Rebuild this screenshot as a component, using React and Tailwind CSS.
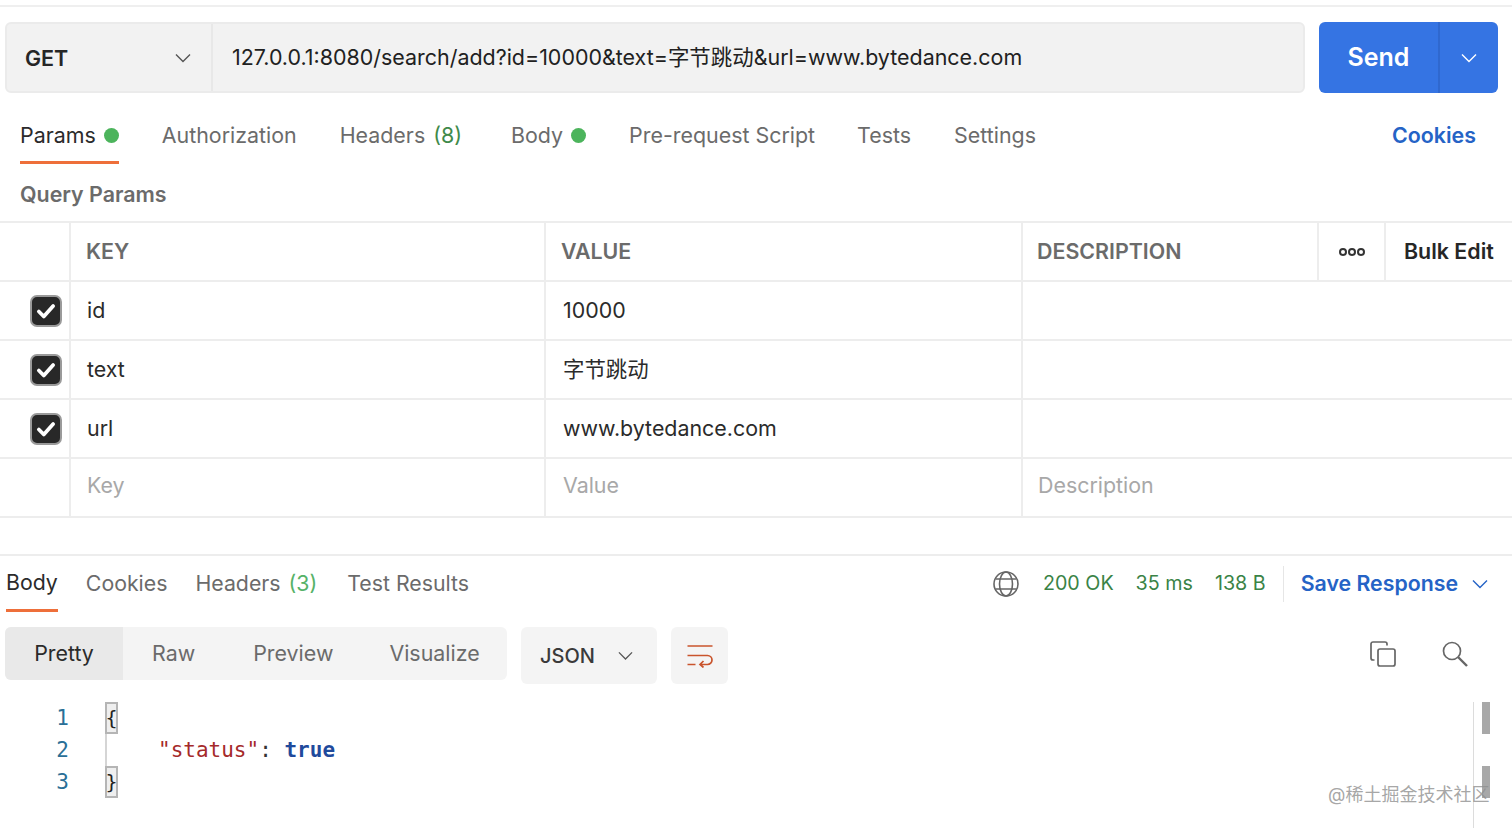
import React from "react";

const sans = 'font-["Inter","Noto_Sans_CJK_SC",sans-serif]';

const Chevron = ({ className = "" }) => (
  <svg viewBox="0 0 16 10" fill="none" stroke="currentColor" strokeWidth="1.4" className={className}>
    <path d="M1 1.5 8 8.5 15 1.5" />
  </svg>
);

const Tick = () => (
  <svg viewBox="0 0 20 20" fill="none" stroke="white" strokeWidth="3.4" className="h-[22px] w-[22px]">
    <path d="M3.5 10.5 8 15 16.5 5.5" strokeLinecap="round" strokeLinejoin="round" />
  </svg>
);

const Dot = () => <span className="h-[15px] w-[15px] rounded-full bg-[#4cb45c]" />;

const RequestTab = ({ label, count, dot, active, className = "" }) => (
  <div className={`flex h-full items-center gap-[8px] border-b-[3px] pb-[5px] ${active ? "border-[#ee6f3a] text-[#2b2b2b]" : "border-transparent text-[#6b6b6b]"} ${className}`}>
    <span>{label}</span>
    {count && <span className="text-[#3f8a4a]">{count}</span>}
    {dot && <Dot />}
  </div>
);

const ParamRow = ({ name, value }) => (
  <div className="grid h-[59px] grid-cols-[71px_475px_477px_1fr] border-b-2 border-[#ededed] text-[21.4px] text-[#2b2b2b]">
    <div className="flex items-center justify-end border-r-2 border-[#ededed] pr-[7px]">
      <div className="flex h-[32px] w-[32px] items-center justify-center rounded-[7px] border-2 border-[#9a9a9a] bg-[#282828]">
        <Tick />
      </div>
    </div>
    <div className="flex items-center border-r-2 border-[#ededed] pb-[1px] pl-[16px]">{name}</div>
    <div className="flex items-center border-r-2 border-[#ededed] pb-[1px] pl-[17px]">{value}</div>
    <div />
  </div>
);

const App = () => (
  <div className={`relative h-[828px] w-[1512px] overflow-hidden bg-white ${sans}`}>
    <div className="mt-[5px] h-[2px] bg-[#efefef]" />

    {/* url bar */}
    <div className="mt-[15px] flex h-[71px] pl-[5px] pr-[14px]">
      <div className="flex w-[1300px] rounded-[6px] border-2 border-[#ebebeb] bg-[#f2f2f2]">
        <div className="flex w-[206px] items-center justify-between border-r-2 border-[#e8e8e8] pl-[18px] pr-[20px]">
          <span className="pt-[1px] text-[21.5px] font-semibold text-[#262626]">GET</span>
          <Chevron className="w-[16px] text-[#555]" />
        </div>
        <div className="flex items-center pb-[1px] pl-[19px] text-[21.45px] text-[#212121]">
          127.0.0.1:8080/search/add?id=10000&text=字节跳动&url=www.bytedance.com
        </div>
      </div>
      <div className="ml-[14px] flex w-[179px] rounded-[6px] bg-[#3574e3] text-white">
        <div className="flex w-[121px] items-center justify-center border-r-2 border-[#2f68cf] text-[25px] font-semibold">Send</div>
        <div className="flex flex-1 items-center justify-center">
          <Chevron className="w-[16px]" />
        </div>
      </div>
    </div>

    {/* request tabs */}
    <div className="mt-[21px] flex h-[50px] items-center pl-[20px] pr-[36px] text-[21.4px]">
      <RequestTab label="Params" dot active />
      <RequestTab label="Authorization" className="ml-[43px]" />
      <RequestTab label="Headers" count="(8)" className="ml-[43px]" />
      <RequestTab label="Body" dot className="ml-[49px]" />
      <RequestTab label="Pre-request Script" className="ml-[43px]" />
      <RequestTab label="Tests" className="ml-[42px]" />
      <RequestTab label="Settings" className="ml-[43px]" />
      <span className="ml-auto pb-[8px] font-semibold text-[#2563c6]">Cookies</span>
    </div>

    <div className="mt-[16px] h-[41px] pl-[20px] text-[21.4px] font-semibold leading-[28px] text-[#6b6b6b]">Query Params</div>

    {/* params table */}
    <div className="border-t-2 border-[#ededed]">
      <div className="grid h-[59px] grid-cols-[71px_475px_477px_296px_67px_1fr] border-b-2 border-[#ededed] text-[21.4px] font-semibold text-[#6b6b6b]">
        <div className="border-r-2 border-[#ededed]" />
        <div className="flex items-center border-r-2 border-[#ededed] pb-[1px] pl-[15px]">KEY</div>
        <div className="flex items-center border-r-2 border-[#ededed] pb-[1px] pl-[15px]">VALUE</div>
        <div className="flex items-center border-r-2 border-[#ededed] pb-[1px] pl-[14px]">DESCRIPTION</div>
        <div className="flex items-center justify-center gap-[1px] border-r-2 border-[#ededed]">
          <span className="h-[8px] w-[8px] rounded-full border-2 border-[#333]" />
          <span className="h-[8px] w-[8px] rounded-full border-2 border-[#333]" />
          <span className="h-[8px] w-[8px] rounded-full border-2 border-[#333]" />
        </div>
        <div className="flex items-center pb-[1px] pl-[18px] text-[#262626]">Bulk Edit</div>
      </div>
      <ParamRow name="id" value="10000" />
      <ParamRow name="text" value="字节跳动" />
      <ParamRow name="url" value="www.bytedance.com" />
      <div className="grid h-[59px] grid-cols-[71px_475px_477px_1fr] border-b-2 border-[#ededed] text-[21.4px] text-[#a8a8a8]">
        <div className="border-r-2 border-[#ededed]" />
        <div className="flex items-center border-r-2 border-[#ededed] pb-[4px] pl-[16px]">Key</div>
        <div className="flex items-center border-r-2 border-[#ededed] pb-[4px] pl-[17px]">Value</div>
        <div className="flex items-center pb-[4px] pl-[15px]">Description</div>
      </div>
    </div>

    {/* response */}
    <div className="mt-[36px] border-t-2 border-[#ededed]">
      <div className="flex h-[56px] items-center pl-[6px] pr-[24px] text-[21.3px]">
        <div className="flex h-full items-center border-b-[3px] border-[#ee6f3a] pt-[1px] text-[#2b2b2b]">Body</div>
        <span className="mb-[1px] ml-[28px] text-[#6b6b6b]">Cookies</span>
        <span className="mb-[1px] ml-[28px] text-[#6b6b6b]">Headers</span>
        <span className="mb-[1px] ml-[8px] text-[#56b268]">(3)</span>
        <span className="mb-[1px] ml-[30px] text-[#6b6b6b]">Test Results</span>
        <div className="mb-[1px] ml-auto flex items-center text-[19.7px] text-[#3a8346]">
          <svg viewBox="0 0 26 26" fill="none" stroke="#666" strokeWidth="1.6" className="mr-[24px] h-[26px] w-[26px]">
            <circle cx="13" cy="13" r="12" />
            <ellipse cx="13" cy="13" rx="6.5" ry="12" />
            <path d="M2.5 8h21M2.5 18h21" />
          </svg>
          <span>200 OK</span>
          <span className="ml-[22px]">35 ms</span>
          <span className="ml-[22px]">138 B</span>
          <span className="ml-[17px] h-[36px] w-[1px] bg-[#e6e6e6]" />
          <span className="ml-[17px] text-[21.3px] font-semibold text-[#2563c6]">Save Response</span>
          <Chevron className="ml-[14px] w-[16px] text-[#2563c6]" />
        </div>
      </div>

      {/* view toolbar */}
      <div className="mt-[15px] flex h-[57px] items-start pl-[5px] pr-[44px]">
        <div className="flex h-[53px] w-[502px] items-center rounded-[6px] bg-[#f4f4f4] text-[21.4px] text-[#6b6b6b]">
          <div className="flex h-full w-[118px] items-center justify-center rounded-l-[6px] bg-[#e9e9e9] text-[#2b2b2b]">Pretty</div>
          <span className="ml-[29px]">Raw</span>
          <span className="ml-[58px]">Preview</span>
          <span className="ml-[56px]">Visualize</span>
        </div>
        <div className="ml-[14px] flex h-[57px] w-[136px] items-center justify-between rounded-[6px] bg-[#f4f4f4] pl-[19px] pr-[24px]">
          <span className="text-[20px] font-medium text-[#3a3a3a]">JSON</span>
          <Chevron className="w-[15px] text-[#555]" />
        </div>
        <div className="ml-[14px] flex h-[57px] w-[57px] items-center justify-center rounded-[6px] bg-[#f4f4f4]">
          <svg viewBox="0 0 26 24" fill="none" stroke="#c9542c" strokeWidth="1.7" className="h-[24px] w-[26px]">
            <path d="M0.5 2h25M0.5 11.5h20a4.5 4.5 0 0 1 0 9h-7M16.5 17l-3.5 3.5 3.5 3M0.5 20.5h8" />
          </svg>
        </div>
        <svg viewBox="0 0 26 26" fill="none" stroke="#666" strokeWidth="1.7" className="ml-auto mr-[46px] mt-[14px] h-[26px] w-[26px]">
          <rect x="8" y="8" width="17" height="17" rx="2" />
          <path d="M4.5 19H3a2 2 0 0 1-2-2V3a2 2 0 0 1 2-2h12a2 2 0 0 1 2 2v1.5" />
        </svg>
        <svg viewBox="0 0 26 26" fill="none" stroke="#666" strokeWidth="1.7" className="mt-[14px] h-[26px] w-[26px]">
          <circle cx="10" cy="10" r="8.5" />
          <path d="M16 16l9 9" strokeWidth="2.4" />
        </svg>
      </div>

      {/* code */}
      <div className="mt-[18px] flex h-[127px]">
        <div className="flex w-[69px] flex-col items-end font-['DejaVu_Sans_Mono',monospace] text-[21px] leading-[32px] text-[#2a6f97]">
          <span className="h-[32px]">1</span>
          <span className="h-[32px]">2</span>
          <span className="h-[32px]">3</span>
        </div>
        <div className="ml-[36px] flex w-[13px] flex-col">
          <div className="flex h-[32px] w-[13px] items-center justify-center border-2 border-[#b5b5b5] bg-[#efefef] font-['DejaVu_Sans_Mono',monospace] text-[20px] leading-none text-[#222]">{"{"}</div>
          <div className="h-[32px] w-[2px] bg-[#d5d5d5]" />
          <div className="flex h-[32px] w-[13px] items-center justify-center border-2 border-[#b5b5b5] bg-[#efefef] font-['DejaVu_Sans_Mono',monospace] text-[20px] leading-none text-[#222]">{"}"}</div>
        </div>
        <div className="ml-[40px] mt-[32px] whitespace-pre font-['DejaVu_Sans_Mono',monospace] text-[21px] leading-[32px]">
          <span className="text-[#a52a2a]">"status"</span>
          <span className="text-[#333]">: </span>
          <span className="font-bold text-[#1f4a9c]">true</span>
        </div>
        <div className="ml-auto mr-[18px] flex w-[21px] flex-col border-l border-[#dcdcdc] pl-[8px]">
          <div className="h-[32px] w-[8px] bg-[#a8a8a8]" />
          <div className="mt-[32px] h-[32px] w-[8px] bg-[#a8a8a8]" />
        </div>
      </div>
    </div>

    {/* watermark */}
    <div className="absolute left-[1328px] top-[783px] text-[18px] leading-[24px] text-[#8f8f8f]/80">@稀土掘金技术社区</div>
  </div>
);

export default App;
